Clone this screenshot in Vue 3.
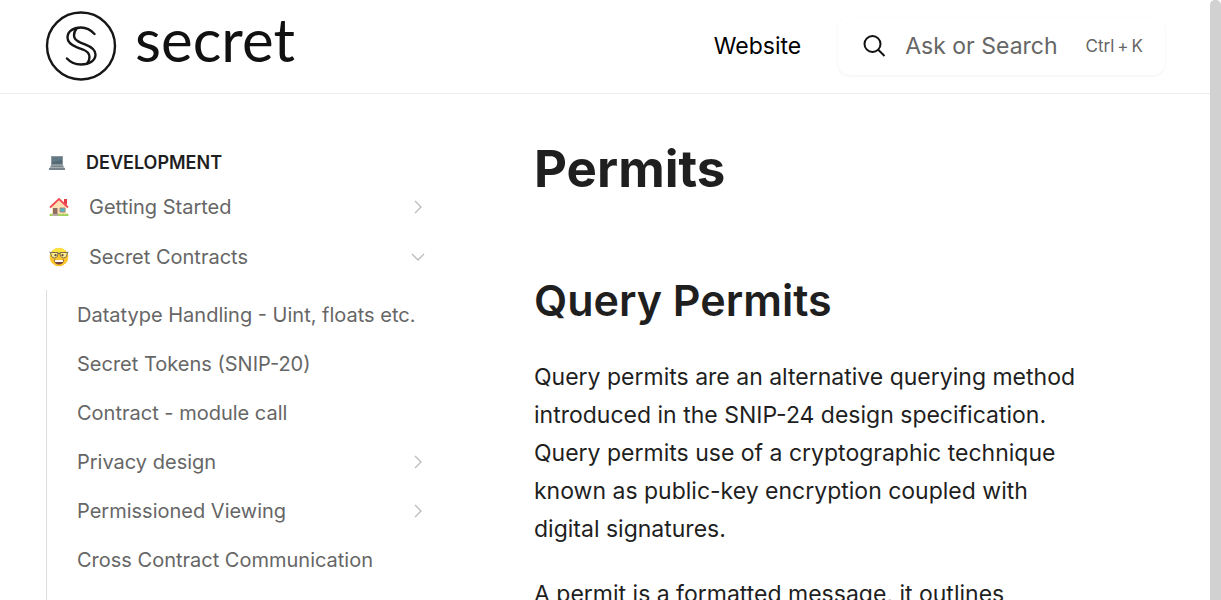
<script setup>
const pages = [
  { title: 'Datatype Handling - Uint, floats etc.' },
  { title: 'Secret Tokens (SNIP-20)' },
  { title: 'Contract - module call' },
  { title: 'Privacy design', nested: true },
  { title: 'Permissioned Viewing', nested: true },
  { title: 'Cross Contract Communication' },
]
</script>

<template>
  <div class="viewport">
    <div class="page">
      <header class="topbar">
        <a class="brand" href="#" aria-label="secret">
          <svg class="emblem" viewBox="0 0 72 72" fill="none" stroke="#161616" aria-hidden="true">
            <ellipse cx="36" cy="36" rx="34" ry="33.500" stroke-width="2.4" />
            <g stroke-width="2.4" stroke-linecap="round">
              <path d="M49.500 24C45 19 41 17.500 36 17.500C28 17.500 22.500 21.500 22.500 27.500C22.500 32 26 35 32 37.300L38 39.500C42.500 41.300 44.500 43.500 44.500 47C44.500 50 43.500 52 42 53.500" />
              <path d="M22 48.500C26 53 31 54.500 36 54.500C44.500 54.500 50.500 50.500 50.500 44.500C50.500 39.500 46.500 36.800 40 34.300L36 32.800C31 30.800 29 28.500 29 25.500C29 22.500 30 20.500 31.500 18.500" />
            </g>
          </svg>
          <span class="wordmark">secret</span>
        </a>
        <nav class="links"><a href="#">Website</a></nav>
        <button class="search" type="button">
          <svg class="lens" viewBox="0 0 24 24" fill="none" stroke="#111" stroke-width="2" aria-hidden="true">
            <circle cx="10.500" cy="10" r="8" />
            <path d="M16 15.500L22.500 22" />
          </svg>
          <span class="prompt">Ask or Search</span>
          <span class="keys"><span>Ctrl</span><span>+</span><span>K</span></span>
        </button>
      </header>

      <div class="columns">
        <aside class="sidebar">
          <h2 class="group">
            <svg class="laptop" viewBox="0 0 16 16" aria-hidden="true">
              <path d="M2 1H14V10H2Z" fill="#8d989e" />
              <path d="M3 2H13V9H3Z" fill="#526a75" />
              <path d="M3 2H13V5L3 7Z" fill="#607984" />
              <path d="M2 10H14L15.500 13H0.500Z" fill="#a3adb3" />
              <path d="M2.500 10.500H13.500L14 12H2Z" fill="#7c878e" />
              <path d="M0 13H16V15H0Z" fill="#78848b" />
            </svg>
            <span>DEVELOPMENT</span>
          </h2>
          <a class="item top" href="#">
            <svg class="emoji" viewBox="0 0 20 20" aria-hidden="true">
              <path d="M3 9L10 3L17 9V18H3Z" fill="#ffe0b2" />
              <path d="M15 2H18V8L15 6Z" fill="#e53940" />
              <path d="M1 10.500L10 2L19 10.500" fill="none" stroke="#f44b55" stroke-width="1.800" />
              <path d="M4 11H8.500V18H4Z" fill="#8d6e63" />
              <path d="M11 11H16V15H11Z" fill="#4db6c8" stroke="#a58a7b" stroke-width="1" />
              <path d="M0.500 17.500Q2 15.500 3.500 17.500H8.500L10 16.500L12 17.500L14 16.500L16 17.500Q18 15.500 19.500 17.500V19H0.500Z" fill="#a3d25a" />
              <path d="M3.500 17H9V19H3.500Z" fill="#b8aaa4" />
            </svg>
            <span class="label">Getting Started</span>
            <svg class="chevron" viewBox="0 0 16 16" aria-hidden="true"><path d="M5 2L11 8L5 14" /></svg>
          </a>
          <a class="item top" href="#">
            <svg class="emoji" viewBox="0 0 20 20" aria-hidden="true">
              <circle cx="10" cy="10" r="9.300" fill="#fcc62c" />
              <path d="M3 4Q10 -2 17 4Q13 6 10 6Q6 6 3 4Z" fill="#ffe43e" />
              <path d="M1.500 5.500H9L8.500 9Q7.500 11 5.500 11Q3 11 2.500 9ZM18.500 5.500H11L11.500 9Q12.500 11 14.500 11Q17 11 17.500 9Z" fill="#ffe98a" stroke="#6b6550" stroke-width="0.900" />
              <path d="M9 6.500H11M0.500 5L2 6M19.500 5L18 6" fill="none" stroke="#6b6550" stroke-width="1" />
              <circle cx="6.500" cy="8.200" r="1.100" fill="#5c4a3c" />
              <circle cx="13.500" cy="8.200" r="1.100" fill="#5c4a3c" />
              <path d="M5 12.500Q10 13.500 15 12.500Q14.500 17.500 10 17.500Q5.500 17.500 5 12.500Z" fill="#79443b" />
              <path d="M6 13H14V15H6Z" fill="#fff" />
            </svg>
            <span class="label">Secret Contracts</span>
            <svg class="chevron" viewBox="0 0 16 16" aria-hidden="true"><path d="M2 5L8 11L14 5" /></svg>
          </a>
          <div class="children">
            <a v-for="page in pages" :key="page.title" class="item" href="#">
              <span class="label">{{ page.title }}</span>
              <svg v-if="page.nested" class="chevron" viewBox="0 0 16 16" aria-hidden="true"><path d="M5 2L11 8L5 14" /></svg>
            </a>
          </div>
        </aside>

        <main class="article">
          <h1>Permits</h1>
          <h2>Query Permits</h2>
          <p>Query permits are an alternative querying method introduced in the SNIP-24 design specification. Query permits use of a cryptographic technique known as public-key encryption coupled with digital signatures.</p>
          <p>A permit is a formatted message, it outlines</p>
        </main>
      </div>
    </div>
    <div class="scrollbar" aria-hidden="true"></div>
  </div>
</template>

<style>
body { background: #fff; }
</style>

<style scoped>
.viewport {
  display: flex;
  height: 100vh;
  overflow: hidden;
  font-family: Inter, "Liberation Sans", sans-serif;
  color: #1f1f1f;
}
.page { display: flex; flex-direction: column; flex: 1; min-width: 0; }
.scrollbar { width: 11px; background: #d1d1d1; border-radius: 5px 5px 0 0; }
a { color: inherit; text-decoration: none; }
svg { flex: none; }

.topbar {
  display: flex;
  flex: none;
  align-items: center;
  height: 92px;
  padding: 0 45px 1px;
  border-bottom: 1px solid #ededed;
}
.brand { display: flex; align-items: center; gap: 18px; }
.emblem { width: 72px; height: 72px; }
.wordmark {
  font-family: Lato, "Noto Sans", sans-serif;
  font-size: 60px;
  line-height: 60px;
  padding-bottom: 14px;
  color: #111;
}
.links { margin-left: auto; font-size: 23px; color: #000; }
.search {
  display: flex;
  align-items: center;
  height: 58px;
  margin-left: 37px;
  padding: 0 22px 0 24px;
  border: 0;
  border-radius: 12px;
  background: #fff;
  box-shadow: 0 1px 3px rgba(0, 0, 0, 0.06);
  font-family: inherit;
  color: #666;
}
.lens { width: 24px; height: 24px; margin-right: 19px; }
.prompt { font-size: 23px; margin-right: 28px; }
.keys { display: flex; gap: 3px; font-size: 17px; }

.columns { display: flex; flex: 1; padding-left: 46px; }
.sidebar { display: flex; flex-direction: column; flex: none; width: 394px; padding-top: 52px; }
.group {
  display: flex;
  align-items: center;
  gap: 21px;
  margin: 0 0 2px;
  padding-left: 3px;
  font-size: 18px;
  line-height: 34px;
  font-weight: 600;
}
.laptop { width: 16px; height: 16px; }
.item {
  display: flex;
  align-items: center;
  height: 49px;
  padding: 0 14px 0 30px;
  font-size: 20px;
  color: #666;
}
.top { height: 50px; padding-left: 3px; }
.emoji { width: 20px; height: 20px; margin-right: 20px; }
.label { flex: 1; white-space: nowrap; }
.chevron { width: 16px; height: 16px; fill: none; stroke: #bdbdbd; stroke-width: 1.400; }
.children { flex: 1; margin-top: 8px; border-left: 1px solid #dedede; }

.article { flex: 1; min-width: 0; padding: 43px 126px 0 94px; }
h1 { margin: 0; font-size: 51px; line-height: 64px; font-weight: 700; }
.article h2 { margin: 73px 0 32px; font-size: 43px; line-height: 52px; font-weight: 600; }
p { margin: 0 0 27px; font-size: 23px; line-height: 38px; }
</style>
